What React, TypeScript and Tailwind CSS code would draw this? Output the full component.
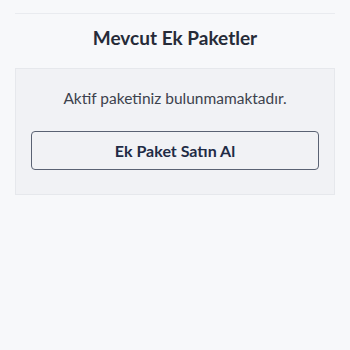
import React from "react";

export default function App() {
  return (
    <div
      className="w-[350px] h-[350px] bg-[#f7f8fa] pt-[13px] px-[15px]"
      style={{ fontFamily: "Lato, 'Noto Sans', sans-serif" }}
    >
      <div className="border-t border-[#e9ebef]">
        <h1 className="text-center text-[19px] font-bold text-[#262b38] pt-[9px] pb-[15px] leading-[30px]">
          Mevcut Ek Paketler
        </h1>
        <div className="bg-[#f1f2f5] border border-[#e6e8ec] px-[15px] pt-[17px] pb-[24px]">
          <p className="text-center text-[15.5px] text-[#3d424d] leading-[24px]">
            Aktif paketiniz bulunmamaktadır.
          </p>
          <button className="mt-[21px] w-full h-[39px] border-[1.5px] border-[#5a6273] rounded-[4px] text-[16px] font-bold text-[#1f2b45]">
            Ek Paket Satın Al
          </button>
        </div>
      </div>
    </div>
  );
}
